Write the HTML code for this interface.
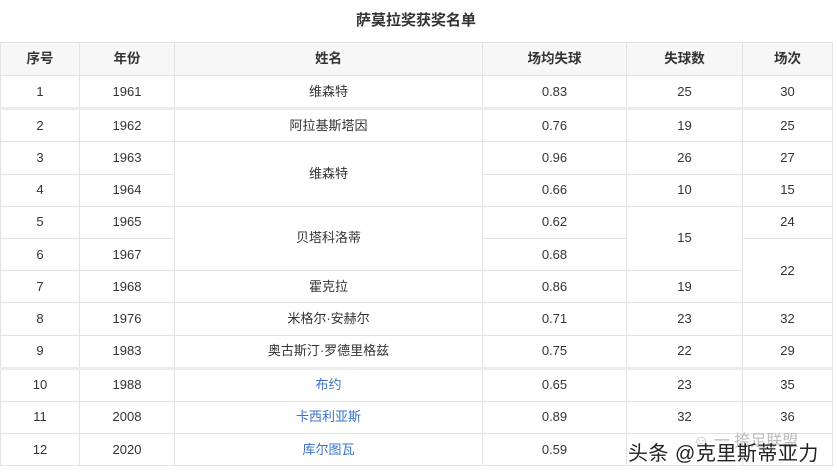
<!DOCTYPE html>
<html><head><meta charset="utf-8"><style>
body{margin:0;width:837px;height:474px;background:#fff;overflow:hidden;position:relative;font-family:"Liberation Sans","Noto Sans CJK SC",sans-serif;color:#333;}
.title{position:absolute;top:9px;left:0;width:832px;text-align:center;font-size:15px;font-weight:bold;color:#333;}
table{position:absolute;left:0;top:42px;border-collapse:collapse;table-layout:fixed;width:833px;font-size:13px;}
td,th{border:1px solid #e3e3e3;text-align:center;padding:0;height:31.2px;line-height:14px;}
th{background:#f7f7f7;font-weight:bold;font-size:13.5px;height:32px;}
tr.sep td{border-top:3px solid #ececec;}
.b{color:#3a72c8;}
.wm{position:absolute;left:628px;top:437px;font-size:20px;color:#222;letter-spacing:0.5px;}
.wm2{position:absolute;left:693px;top:427px;font-size:16px;color:#bbb;}
</style></head><body>
<div class="title">萨莫拉奖获奖名单</div>
<table>
<colgroup><col style="width:79px"><col style="width:95px"><col style="width:308px"><col style="width:144px"><col style="width:116px"><col style="width:90px"></colgroup>
<tr><th>序号</th><th>年份</th><th>姓名</th><th>场均失球</th><th>失球数</th><th>场次</th></tr>
<tr><td>1</td><td>1961</td><td>维森特</td><td>0.83</td><td>25</td><td>30</td></tr>
<tr class="sep"><td>2</td><td>1962</td><td>阿拉基斯塔因</td><td>0.76</td><td>19</td><td>25</td></tr>
<tr><td>3</td><td>1963</td><td rowspan="2">维森特</td><td>0.96</td><td>26</td><td>27</td></tr>
<tr><td>4</td><td>1964</td><td>0.66</td><td>10</td><td>15</td></tr>
<tr><td>5</td><td>1965</td><td rowspan="2">贝塔科洛蒂</td><td>0.62</td><td rowspan="2">15</td><td>24</td></tr>
<tr><td>6</td><td>1967</td><td>0.68</td><td rowspan="2">22</td></tr>
<tr><td>7</td><td>1968</td><td>霍克拉</td><td>0.86</td><td>19</td></tr>
<tr><td>8</td><td>1976</td><td>米格尔·安赫尔</td><td>0.71</td><td>23</td><td>32</td></tr>
<tr><td>9</td><td>1983</td><td>奥古斯汀·罗德里格兹</td><td>0.75</td><td>22</td><td>29</td></tr>
<tr class="sep"><td>10</td><td>1988</td><td class="b">布约</td><td>0.65</td><td>23</td><td>35</td></tr>
<tr><td>11</td><td>2008</td><td class="b">卡西利亚斯</td><td>0.89</td><td>32</td><td>36</td></tr>
<tr><td>12</td><td>2020</td><td class="b">库尔图瓦</td><td>0.59</td><td></td><td></td></tr>
</table>
<div class="wm2">☺ 一 捺足联盟</div>
<div class="wm">头条 @克里斯蒂亚力</div>
</body></html>
